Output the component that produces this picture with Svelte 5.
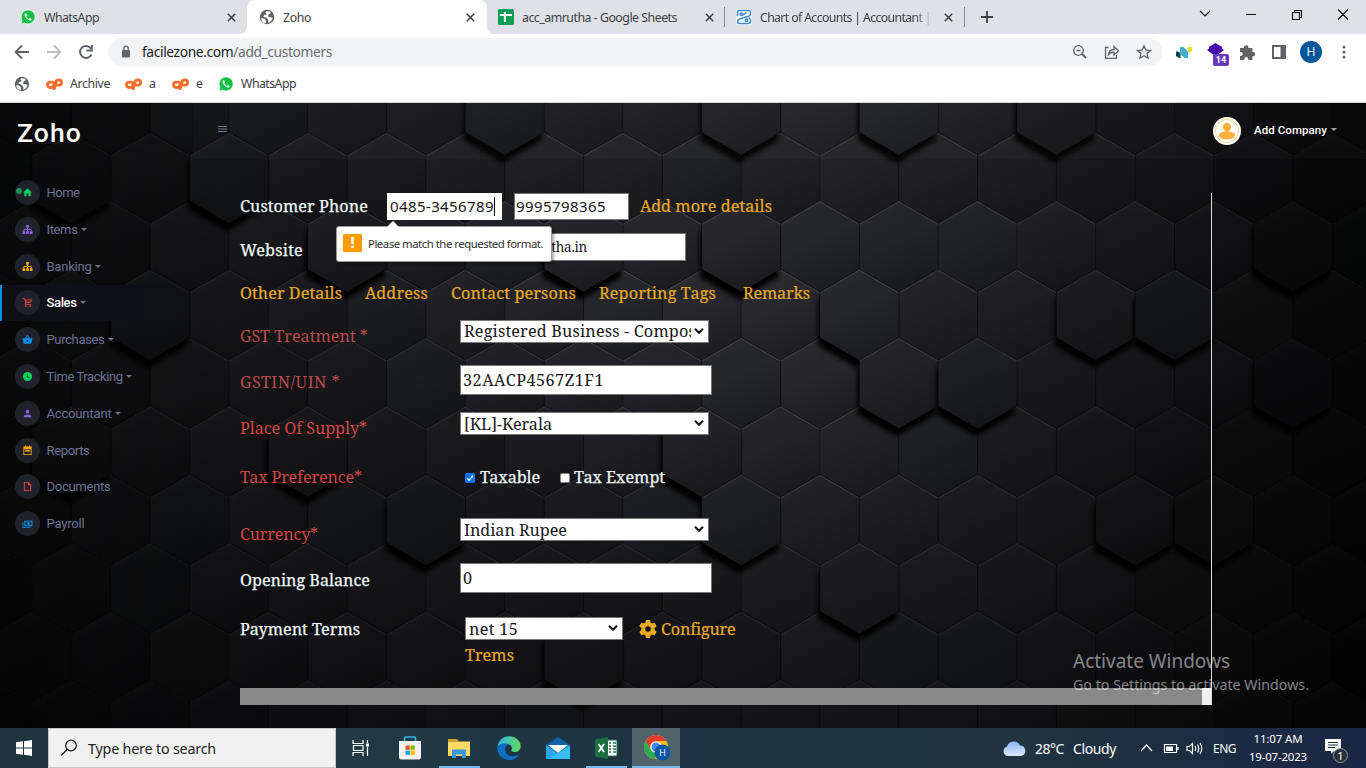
<script>
  const W = 78.8;
  const P = 68.4;
  const raised = new Set([
    '-2:-1', '-2:1', '-2:3', '0:-1', '1:0', '2:2', '1:3', '1:4', '3:-2', '4:-1', '5:0', '4:4', '4:5',
    '0:6', '2:6', '2:1', '-1:-10', '0:-6', '0:-3', '3:-7', '6:-3', '3:-10', '4:-5', '-1:-8', '-2:-4', '1:-9'
  ]);
  const stops = [[0, 12], [150, 19], [350, 27], [600, 35], [820, 40], [1000, 32], [1150, 22], [1300, 9], [1420, 3]];
  function level(x, y) {
    let v = 4;
    if (x <= 0) v = 11;
    for (let i = 0; i < stops.length - 1; i++) {
      const [a, p] = stops[i];
      const [b, q] = stops[i + 1];
      if (x >= a && x < b) v = p + ((q - p) * (x - a)) / (b - a);
    }
    const d = y < 200 ? 0.9 : y < 330 ? 1 : 1 - (y - 330) / 800;
    return v * d;
  }
  const rgb = (v) => `rgb(${Math.round(v)},${Math.round(v * 1.01)},${Math.round(v * 1.13)})`;
  const hexes = [];
  for (let r = -3; r <= 8; r++) {
    for (let c = -12; c <= 8; c++) {
      const x = 820 + W * c + (Math.abs(r) % 2 ? W / 2 : 0);
      const y = 200.8 + P * r - 103;
      const n = Math.abs(Math.sin(r * 12.98 + c * 78.2)) * 0.12 + 0.93;
      const l = level(x, y + 148) * n;
      hexes.push({ x, y, l, up: raised.has(`${r}:${c}`) });
    }
  }
  hexes.sort((a, b) => a.up - b.up);

  function fit(node, w) {
    const now = node.getBoundingClientRect().width;
    node.style.letterSpacing = (w - now) / node.textContent.length + 'px';
  }

  const nav = [
    { t: 'Home', w: 33, k: 'home', c: '#00d25b' },
    { t: 'Items', w: 31, k: 'tree', c: '#8f5fe8', d: 1 },
    { t: 'Banking', w: 45, k: 'tree', c: '#ffab00', d: 1 },
    { t: 'Sales', w: 30, k: 'cart', c: '#fc424a', d: 1, on: 1 },
    { t: 'Purchases', w: 58, k: 'basket', c: '#0090e7', d: 1 },
    { t: 'Time Tracking', w: 76, k: 'clock', c: '#00d25b', d: 1 },
    { t: 'Accountant', w: 65, k: 'user', c: '#8f5fe8', d: 1 },
    { t: 'Reports', w: 43, k: 'cal', c: '#ffab00' },
    { t: 'Documents', w: 64, k: 'doc', c: '#fc424a' },
    { t: 'Payroll', w: 38, k: 'cash', c: '#0090e7' }
  ];
  const paths = {
    home: 'M10 20v-6h4v6h5v-8h3L12 3 2 12h3v8z',
    tree: 'M9 2v6h2v3H5c-1 0-2 1-2 2v3H1v6h6v-6H5v-3h6v3H9v6h6v-6h-2v-3h6v3h-2v6h6v-6h-2v-3c0-1-1-2-2-2h-6V8h2V2z',
    cart: 'M1 2v2h3l3.600 7.600-1.400 2.400c-.7 1.300.2 3 1.800 3h12v-2H8.500l1.100-2h7.500c.8 0 1.400-.4 1.800-1l3.600-6.600H6.200L5.300 2zM8.500 7h11l-2 3.500h-7.300zM8 18a2 2 0 1 0 0 4 2 2 0 0 0 0-4m10 0a2 2 0 1 0 0 4 2 2 0 0 0 0-4',
    basket: 'M5.500 21c-.9 0-1.700-.6-2-1.500L1 10V9h5.600L11 2.400h2L17.400 9H23v1l-2.500 9.500c-.3.900-1.100 1.500-2 1.500zM12 5 9 9h6zm0 8a2 2 0 1 0 0 4 2 2 0 0 0 0-4',
    clock: 'M12 2a10 10 0 1 0 0 20 10 10 0 0 0 0-20m4.200 14.200L11 13V7h1.500v5.200l4.500 2.700z',
    user: 'M12 4a4 4 0 1 1 0 8 4 4 0 0 1 0-8m0 10c4.400 0 8 1.800 8 4v2H4v-2c0-2.200 3.600-4 8-4',
    cal: 'M7 1v2H3v19h18V3h-4V1h-2v2H9V1zM5 9h14v11H5zm2 2v3h10v-3z',
    doc: 'M4 2v20h16V8l-6-6zm2 2h7v5h5v11H6z',
    cash: 'M5 6h18v12H5zm9 3a3 3 0 1 1 0 6 3 3 0 0 1 0-6M9 8a2 2 0 0 1-2 2v4a2 2 0 0 1 2 2h10a2 2 0 0 1 2-2v-4a2 2 0 0 1-2-2zM1 10h2v10h16v2H1z'
  };
</script>

{#snippet globe()}
  <svg class="i16" viewBox="0 0 16 16"><circle cx="8" cy="8" r="7.2" fill="#5f6368" /><path d="M2.300 9 6 10l1 2-.3 2.300C4 14 2 11.500 2.300 9zM7.300 2.300l3.500.2.9 1.500-2.200 1.800-.5 2 2.900.5 1.700 1c-.8 2.600-2.500 4.200-4.200 4.400l-.1-2.900-2.200-2.300-2.700-.8.6-1.700 2.200-.3.200-1.400-1.200-.8z" fill="#fff" /></svg>
{/snippet}
{#snippet whats()}
  <svg class="i16" viewBox="0 0 16 16"><path d="M.8 15.200l1.200-3.900A7 7 0 1 1 4.700 14z" fill="#0ec143" stroke="#fff" stroke-width=".8" /><path d="M5.600 4.200c-.9.400-1.300 1.600-.7 2.900.9 2.100 2.400 3.700 4.700 4.400 1.100.2 2-.5 2.100-1.500L9.900 9l-.9.900C7.700 9.300 6.900 8.500 6.300 7.200l.7-.8-.7-2.100z" fill="#fff" /></svg>
{/snippet}
{#snippet cp()}
  <svg class="cp" viewBox="0 0 17 12"><g fill="none" stroke="#ff6c2c" stroke-width="2.800"><path d="M7.500 4.200H4.200a2.600 2.600 0 0 0 0 5.300H5.400C7.200 9.500 7.700 7.500 8.200 5.500L8.700 3.500M7.900 12 10.100 3.800Q10.600 2 12.300 2H13a2.500 2.500 0 0 1 0 5.200H10.300" /></g></svg>
{/snippet}
{#snippet close()}
  <svg class="x" viewBox="0 0 9 9"><path d="m.8.8 7.400 7.400m0-7.400L.8 8.200" stroke="#3c4043" stroke-width="1.500" /></svg>
{/snippet}
{#snippet chev()}
  <svg class="chev" viewBox="0 0 10 6"><path d="m1 .8 4 4 4-4" fill="none" stroke="#111" stroke-width="2" /></svg>
{/snippet}

<div class="screen">
  <div class="tabs">
    <div class="tab first">{@render whats()}<span use:fit={55}>WhatsApp</span>{@render close()}</div>
    <div class="tab active">{@render globe()}<span use:fit={28}>Zoho</span>{@render close()}</div>
    <div class="tab third">
      <svg class="i16" viewBox="0 0 16 16"><rect width="16" height="16" rx="1.500" fill="#0f9d58" /><path d="M2 6h12M6.900 3v10" stroke="#fff" stroke-width="2" /></svg>
      <span use:fit={155}>acc_amrutha - Google Sheets</span>{@render close()}
    </div>
    <div class="tab fourth">
      <svg class="i16" viewBox="0 0 16 16"><rect width="16" height="16" rx="2" fill="#f6f9fc" /><g fill="none" stroke="#488bc9" stroke-width="1.500"><path d="M1.500 7.200V3q0-1.500 1.500-1.500h9.500q2 0 2 2V5q0 1.800-2 2.200L5 9.500q-3.500 1-3.500 3T3.500 14.500H12q2.500 0 2.500-2.500v-.8q0-2-2-2.400" /><circle cx="5.300" cy="5.200" r="1.200" /><circle cx="10.500" cy="11.300" r="1.200" /><path d="m6.500 6 4-2.300" /></g></svg>
      <span class="fade" use:fit={171}>Chart of Accounts | Accountant |</span>{@render close()}
    </div>
    <svg class="plus" viewBox="0 0 12 12"><path d="M6 0v12M0 6h12" stroke="#3c4043" stroke-width="1.800" /></svg>
    <svg class="winctl" viewBox="0 0 160 16"><path d="m10 5 5 5 5-5M56 8.500h10M102.500 6.500h7v7h-7zM104.500 6V4.500h7v7H110M148 3.500l10 10m0-10-10 10" fill="none" stroke="#111" stroke-width="1.100" /></svg>
  </div>
  <div class="bar">
    <svg class="navs" viewBox="0 0 100 16"><path d="M15 8H2m6-6.500L1.500 8 8 14.500" fill="none" stroke="#5f6368" stroke-width="1.800" /><path d="M33 8h13m-6-6.500L46.500 8 40 14.500" fill="none" stroke="#bcbec1" stroke-width="1.800" /><path d="M77.500 10.500A6 6 0 1 1 77 4.500M77.800 1v5.500h-5.500" fill="none" stroke="#5f6368" stroke-width="1.900" /></svg>
    <div class="omni">
      <svg class="lock" viewBox="0 0 10 13"><rect x="1" y="5" width="8" height="7.500" rx="1" fill="#5f6368" /><path d="M2.800 5V3.300a2.200 2.200 0 0 1 4.400 0V5" fill="none" stroke="#5f6368" stroke-width="1.300" /></svg>
      <span class="url" use:fit={190}>facilezone.com<i>/add_customers</i></span>
      <svg class="omnii" viewBox="0 0 80 16"><g fill="none" stroke="#5f6368" stroke-width="1.300"><circle cx="6.500" cy="6.500" r="4.800" /><path d="m10 10 4 4" stroke-width="2" /><path d="M4.500 6.500h4M36.500 3.500h-3v10.800h11V11M36.500 10.500C37 7 39 5.500 42 5.500V2.500L46.500 7 42 11V8.300Q38.500 8 36.500 10.500z" /><path d="m72 1.800 1.900 4.300 4.700.4-3.600 3.100 1.100 4.600-4.100-2.500-4.100 2.500 1.100-4.600-3.600-3.100 4.700-.4z" /></g></svg>
    </div>
    <div class="ext">
      <svg class="i17" viewBox="0 0 16 12"><path d="M0 5.500h1.500l3 1.500v5H3L0 10z" fill="#07444d" /><path d="M4 1h3.500L12 5.500V12H8.500L4 7.500z" fill="#42aecb" /><path d="M12 1h4v3.500L15 6h-3z" fill="#eadb28" /></svg>
      <div class="cube"><svg viewBox="0 0 18 16"><path d="M9 0l7 4.200v2l2 1.300L9 14 0 7.500l2-1.300v-2z" fill="#4707ac" /></svg><b>14</b></div>
      <svg class="puz" viewBox="0 0 16 16"><path d="M1 4h4V3.400a2.200 2.200 0 0 1 4.400 0V4h4v4h.6a2.100 2.100 0 0 1 0 4.200h-.6V16H9.300v-1a2 2 0 0 0-4 0v1H1v-4h.7a2 2 0 0 0 0-4H1z" fill="#5f6368" /></svg>
      <svg class="side" viewBox="0 0 14 14"><path d="M1 1h12v12H1z" fill="#fff" stroke="#5f6368" stroke-width="2" /><path d="M8.500 1H13v12H8.500z" fill="#5f6368" /></svg>
      <span class="prof">H</span>
      <svg class="dots" viewBox="0 0 4 14"><g fill="#5f6368"><circle cx="2" cy="2" r="1.500" /><circle cx="2" cy="7" r="1.500" /><circle cx="2" cy="12" r="1.500" /></g></svg>
    </div>
  </div>
  <div class="marks">
    {@render globe()}
    <div class="mk m1">{@render cp()}<span use:fit={40}>Archive</span></div>
    <div class="mk m2">{@render cp()}<span>a</span></div>
    <div class="mk m3">{@render cp()}<span>e</span></div>
    <div class="mk m4">{@render whats()}<span use:fit={55}>WhatsApp</span></div>
  </div>

  <div class="page">
    <svg class="bg" viewBox="0 0 1366 625" width="1366" height="625">
      <defs>
        <linearGradient id="shade" x1="0" y1="0" x2=".4" y2="1"><stop offset="0" stop-color="#fff" stop-opacity=".045" /><stop offset=".5" stop-color="#000" stop-opacity="0" /><stop offset="1" stop-color="#000" stop-opacity=".24" /></linearGradient>
        <filter id="soft" x="-30%" y="-30%" width="160%" height="160%"><feGaussianBlur stdDeviation="2.600" /></filter>
        <filter id="soft2"><feGaussianBlur stdDeviation=".6" /></filter>
        <path id="hex" d="M0 0 39.400 22.700V68.300L0 91-39.400 68.300V22.700z" />
      </defs>
      <rect width="1366" height="625" fill="#030304" />
      {#each hexes as h}
        <g transform="translate({h.x} {h.y})">
          {#if h.up}<use href="#hex" fill="#000" filter="url(#soft)" transform="translate(-2 8)" />{/if}
          <use href="#hex" fill={rgb(h.l)} stroke="#000" stroke-opacity=".25" stroke-width="1" />
          <use href="#hex" fill="url(#shade)" />
          <path d="M-39 23.500 0 1 39 23.500" fill="none" stroke={rgb(h.l * 1.6)} stroke-width="1.200" filter="url(#soft2)" />
        </g>
      {/each}
    </svg>
    <div class="side-nav">
      <div class="brand"><span use:fit={65}>Zoho</span><svg class="burger" viewBox="0 0 9 6"><path d="M0 .5h9M0 3h9M0 5.500h9" stroke="#6c7293" /></svg></div>
      {#each nav as n}
        <div class="item" class:on={n.on}>
          <span class="disc"><svg viewBox="0 0 24 24"><path d={paths[n.k]} fill={n.c} fill-rule="evenodd" /></svg>{#if n.k === 'home'}<em></em>{/if}</span>
          <span class="lbl" use:fit={n.w}>{n.t}</span>
          {#if n.d}<s></s>{/if}
        </div>
      {/each}
    </div>
    <div class="main">
      <header>
        <svg class="avatar" viewBox="0 0 28 28"><circle cx="14" cy="14" r="14" fill="#fff" /><circle cx="14" cy="14" r="11.600" fill="none" stroke="#fbb03b" stroke-width=".6" /><circle cx="14" cy="10" r="4.200" fill="#fbb03b" /><ellipse cx="14" cy="18.300" rx="8.200" ry="4" fill="#fbb03b" /></svg>
        <b use:fit={73}>Add Company</b><s></s>
      </header>
      <div class="form">
        <div class="row r1">
          <div class="l"><span use:fit={128}>Customer Phone</span></div>
          <div class="in a"><span use:fit={104}>0485-3456789</span><u></u>
            <div class="tip"><svg class="arrow" viewBox="0 0 12 6"><path d="M0 6 6 0l6 6z" fill="#fff" /></svg><span class="warn">!</span><span class="msg" use:fit={175}>Please match the requested format.</span></div>
          </div>
          <div class="in b"><span use:fit={90}>9995798365</span></div>
          <span class="gold" use:fit={132}>Add more details</span>
        </div>
        <div class="row r2"><div class="l"><span use:fit={63}>Website</span></div><div class="in web"><span use:fit={44}>utha.in</span></div></div>
        <div class="row r3">
          <span class="gold" use:fit={102}>Other Details</span><span class="gold g2" use:fit={63}>Address</span><span class="gold g2" use:fit={125}>Contact persons</span><span class="gold g2" use:fit={117}>Reporting Tags</span><span class="gold g3" use:fit={67}>Remarks</span>
        </div>
        <div class="row r4"><div class="l dim low"><span use:fit={128}>GST Treatment *</span></div><div class="sel"><span class="clip"><span use:fit={232}>Registered Business - Compos</span></span>{@render chev()}</div></div>
        <div class="row r5"><div class="l dim"><span use:fit={100}>GSTIN/UIN *</span></div><div class="in wide"><span use:fit={141}>32AACP4567Z1F1</span></div></div>
        <div class="row r6"><div class="l red low"><span use:fit={127}>Place Of Supply*</span></div><div class="sel"><span use:fit={88}>[KL]-Kerala</span>{@render chev()}</div></div>
        <div class="row r7">
          <div class="l red"><span use:fit={122}>Tax Preference*</span></div>
          <svg class="chk" viewBox="0 0 10 10"><rect width="10" height="10" rx="1.500" fill="#0075ff" /><path d="m2 5.200 2.100 2.100L8 2.800" fill="none" stroke="#fff" stroke-width="1.400" /></svg>
          <span class="opt" use:fit={60}>Taxable</span>
          <i class="box"></i>
          <span class="opt" use:fit={91}>Tax Exempt</span>
        </div>
        <div class="row r6 r8"><div class="l red low"><span use:fit={78}>Currency*</span></div><div class="sel"><span use:fit={103}>Indian Rupee</span>{@render chev()}</div></div>
        <div class="row r5 r9"><div class="l"><span use:fit={130}>Opening Balance</span></div><div class="in wide"><span use:fit={10}>0</span></div></div>
        <div class="row r10">
          <div class="l"><span use:fit={120}>Payment Terms</span></div>
          <div class="sel short"><span use:fit={49}>net 15</span>{@render chev()}</div>
          <svg class="gear" viewBox="0 0 18 18"><path d="M7 0h4l.6 2.600 1.500.9 2.600-.8 2 3.500-2 1.900v1.800l2 1.900-2 3.500-2.600-.8-1.500.9L11 18H7l-.6-2.600-1.500-.9-2.600.8-2-3.500 2-1.900V8.100l-2-1.900 2-3.500 2.600.8 1.500-.9zm2 6.200a2.800 2.800 0 1 0 0 5.600 2.800 2.800 0 0 0 0-5.600" fill="#e8aa25" fill-rule="evenodd" /></svg>
          <span class="gold" use:fit={74}>Configure</span>
        </div>
        <div class="row r11"><span class="gold" use:fit={49}>Trems</span></div>
        <div class="scroll"></div>
      </div>
    </div>
    <div class="act"><span class="big" use:fit={157}>Activate Windows</span><span use:fit={236}>Go to Settings to activate Windows.</span></div>
  </div>

  <div class="task">
    <div class="start"><svg viewBox="0 0 16 16"><path d="M0 2.300 7 1.300V7.500H0zM8 1.200 16 0v7.500H8zM0 8.500h7v6.200l-7-1zM8 8.500h8V16l-8-1.200z" fill="#fff" /></svg></div>
    <div class="search"><svg viewBox="0 0 18 18"><circle cx="11" cy="6.500" r="5.300" fill="none" stroke="#222" stroke-width="1.300" /><path d="m7.200 10.500-6 6" stroke="#222" stroke-width="1.400" /></svg><span use:fit={128}>Type here to search</span></div>
    <div class="ic"><svg width="18" height="16" viewBox="0 0 18 16"><path d="M1 0v3.500h10V0M1 16v-3.500h10V16M1.500 5.500h9.500v5H1.500zM15.500 0v3m0 4v9" fill="none" stroke="#fff" stroke-width="1.200" /><path d="M14 3.500h3v3h-3z" fill="#fff" /></svg></div>
    <div class="ic store"><svg width="24" height="24" viewBox="0 0 24 24"><path d="M6.500 7V2.500Q6.500 1 8 1h8q1.500 0 1.500 1.500V7" fill="none" stroke="#35b7ea" stroke-width="1.700" /><path d="M1 5h22v16q0 2.500-2.500 2.500h-17Q1 23.500 1 21z" fill="#f3f3f3" /><path d="M7.500 9.500h4.300v4.300H7.500z" fill="#f25022" /><path d="M12.500 9.500h4.300v4.300h-4.300z" fill="#7fba00" /><path d="M7.500 14.500h4.300v4.300H7.500z" fill="#00a4ef" /><path d="M12.500 14.500h4.300v4.300h-4.300z" fill="#ffb900" /></svg></div>
    <div class="ic run"><svg width="22" height="19" viewBox="0 0 22 19"><path d="M0 0h9l2 2.500H0z" fill="#d9a21b" /><path d="M0 2.500h22V17H0z" fill="#ffd866" /><path d="M4 10.500h14V19h-4v-3.500H8V19H4z" fill="#3a96dd" /></svg></div>
    <div class="ic"><svg width="24" height="24" viewBox="0 0 24 24"><defs><linearGradient id="eg" x1="0" x2="1"><stop stop-color="#2ab4e8" /><stop offset="1" stop-color="#64d858" /></linearGradient></defs><path d="M.5 12C.5 5 6 .3 12.300.3 18.500.3 23.700 5 23.700 10c0 4.200-3 6-6 6-2.500 0-4-.8-3.200-2 .9-1.300.6-4.500-2.300-5.500C8.500 7.300 2 7.500.5 12z" fill="url(#eg)" /><path d="M.3 12C1.500 7.500 8.500 6.500 12 8.500c-2.500.5-4 2.300-4 5C8 18 13 22 19.500 19.500c1.500-.6 2.600-.8 1.500.7A12 12 0 0 1 .3 12z" fill="#0f6fc5" /></svg></div>
    <div class="ic"><svg width="24" height="22" viewBox="0 0 24 22"><path d="M0 8 12 0l12 8v6H0z" fill="#1363a9" /><path d="M2 8h20L12 16z" fill="#fff" /><path d="M0 8l12 8.500L24 8v14H0z" fill="#29a7e8" /><path d="m2 22 22-13v13z" fill="#35bff5" /></svg></div>
    <div class="ic run xl"><svg width="23" height="22" viewBox="0 0 23 22"><path d="M12 3h10v16H12z" fill="#fff" stroke="#1d7044" /><path d="M14 6h2m2 0h3m-7 3h2m2 0h3m-7 3h2m2 0h3m-7 3h2m2 0h3" stroke="#1d7044" stroke-width="1.500" /><path d="M0 2.500 13 0v22L0 19.500z" fill="#1d7044" /><path d="m3.500 7 5.500 8m0-8-5.500 8" stroke="#fff" stroke-width="1.800" /></svg></div>
    <div class="ic cur"><svg width="28" height="26" viewBox="0 0 28 26"><circle cx="12" cy="12" r="12" fill="#fbc116" /><path d="M1.600 6A12 12 0 0 1 22.400 6H12a6 6 0 0 0-5.600 8z" fill="#e33b2e" /><path d="M1.600 6 7 15a6 6 0 0 0 6.500 2.800L11 24A12 12 0 0 1 1.600 6z" fill="#2da94f" /><circle cx="12" cy="12" r="5.600" fill="#fff" /><circle cx="12" cy="12" r="4.500" fill="#4285f4" /><circle cx="18.500" cy="17.500" r="8" fill="#0a57a5" /><text x="18.500" y="20.800" font-size="9" font-family="Open Sans" fill="#fff" text-anchor="middle">H</text></svg></div>
    <div class="tray">
      <svg class="cloud" viewBox="0 0 24 16"><defs><linearGradient id="cl" x2="0" y2="1"><stop stop-color="#8ab4f0" /><stop offset="1" stop-color="#dbe8fc" /></linearGradient></defs><path d="M5 16a5 5 0 0 1 0-9.500A7 7 0 0 1 18 5.500 5.300 5.300 0 0 1 19 16z" fill="url(#cl)" /></svg>
      <span class="wx" use:fit={29}>28°C</span><span class="wx w2" use:fit={43}>Cloudy</span>
      <svg class="sys" viewBox="0 0 64 16"><g fill="none" stroke="#fff" stroke-width="1.200"><path d="m1 11 5.500-6 5.500 6M24.500 4.500h12v8h-12zM38 7v3M47 6.500h2.500l3-3v10l-3-3H47zM55 6q1.500 2.500 0 5M57.500 4.500q2.500 4 0 8M60 3q3.500 5.500 0 11" /></g><path d="M26 6.500h7v4.500h-7z" fill="#fff" /></svg>
      <span class="eng" use:fit={23}>ENG</span>
      <div class="clock"><span use:fit={49}>11:07 AM</span><span use:fit={58}>19-07-2023</span></div>
      <div class="note"><svg width="16" height="16" viewBox="0 0 16 16"><path d="M0 0h16v12H9l-3 3v-3H0z" fill="#fff" /><path d="M3 3.500h10M3 6h10M3 8.500h7" stroke="#1d2c3f" /></svg><b>1</b></div>
    </div>
  </div>
</div>

<style>
  :global(body) { margin: 0; overflow: hidden; }
  .screen { width: 1366px; height: 768px; display: flex; flex-direction: column; overflow: hidden; font: 12.300px 'Noto Sans', sans-serif; color: #3c4043; }
  .screen :global(*) { box-sizing: border-box; }
  span, b { white-space: nowrap; flex: none; }
  svg { flex: none; display: block; }
  .tabs { height: 34px; background: #dee1e6; display: flex; position: relative; }
  .tab { display: flex; align-items: center; gap: 8px; height: 34px; }
  .tab .x { margin-left: auto; }
  .first { width: 247px; padding: 0 11px 0 20px; }
  .active { width: 240px; background: #fff; padding: 0 12px 0 12px; border-radius: 8px 8px 0 0; position: relative; }
  .active::before, .active::after { content: ''; position: absolute; bottom: 0; width: 8px; height: 8px; left: -8px; background: radial-gradient(circle at 0 0, #dee1e6 8px, #fff 8px); }
  .active::after { left: auto; right: -8px; background: radial-gradient(circle at 100% 0, #dee1e6 8px, #fff 8px); }
  .third { width: 239px; padding: 0 12px 0 11px; position: relative; }
  .fourth { width: 240px; padding: 0 13px 0 10px; position: relative; }
  .third::after, .fourth::after { content: ''; position: absolute; right: 1px; top: 7px; height: 20px; width: 1px; background: #85888c; }
  .fade { -webkit-mask: linear-gradient(90deg, #000 90%, #0002); }
  .i16 { width: 16px; height: 16px; }
  .x { width: 9px; height: 9px; }
  .plus { width: 12px; height: 12px; margin: 11px 0 0 15px; }
  .winctl { width: 160px; margin: 6px 0 0 197px; height: 16px; }
  .bar { height: 35px; background: #fff; display: flex; align-items: center; }
  .navs { width: 100px; height: 16px; margin-left: 14px; }
  .omni { height: 28px; margin-left: -6px; width: 1054px; border-radius: 14px; background: #f1f3f4; display: flex; align-items: center; padding: 0 10px 0 13px; }
  .lock { width: 10px; height: 13px; }
  .url { font-size: 13.800px; color: #202124; margin-left: 11px; }
  .url i { font-style: normal; color: #696d71; }
  .omnii { width: 80px; height: 16px; margin-left: auto; }
  .ext { display: flex; align-items: center; margin-left: 14px; }
  .i17 { width: 16px; height: 12px; }
  .cube { position: relative; margin-left: 15px; width: 17px; height: 17px; }
  .cube b { position: absolute; left: 6px; top: 11px; background: #673ab7; color: #fff; border-radius: 2px; font: bold 9px/12px Roboto; padding: 0 2px; width: 16px; text-align: center; }
  .puz { width: 16px; height: 16px; margin-left: 15px; }
  .side { width: 14px; height: 14px; margin-left: 17px; }
  .prof { width: 22px; height: 22px; border-radius: 50%; background: #01579b; color: #fff; text-align: center; font: 12px/22px 'Open Sans'; margin-left: 14px; }
  .dots { width: 4px; height: 14px; margin-left: 20px; }
  .marks { height: 34px; background: #fff; border-bottom: 1px solid #d4d5d7; display: flex; align-items: center; padding: 0 0 4px 14px; }
  .mk { display: flex; align-items: center; gap: 7px; }
  .m1 { margin-left: 16px; } .m2 { margin-left: 15px; } .m3 { margin-left: 16px; } .m4 { margin-left: 15px; }
  .m2 span, .m3 span { width: 7px; }
  .cp { width: 17px; height: 12px; }
  .page { height: 625px; position: relative; display: flex; background: #050506; overflow: hidden; }
  .bg { position: absolute; inset: 0; }
  .side-nav { width: 240px; position: relative; background: linear-gradient(90deg, #0004, #0000); }
  .brand { height: 71.200px; padding: 12px 13px 0 17px; display: flex; justify-content: space-between; font: 500 26.500px/36px Roboto; color: #fff; }
  .burger { width: 9px; height: 6px; margin-top: 11px; }
  .item { height: 36.800px; display: flex; align-items: center; padding-left: 15px; width: 190px; color: #6c7293; font: 13px Roboto, sans-serif; }
  .disc { width: 25px; height: 25px; border-radius: 50%; background: #20222b; display: flex; align-items: center; justify-content: center; margin-right: 6.500px; position: relative; }
  .disc svg { width: 11px; height: 11px; }
  .disc em { position: absolute; left: 1px; top: 8px; width: 6px; height: 6px; border-radius: 50%; background: #208c59; }
  .item.on { background: linear-gradient(90deg, #0f1015 75%, #0f101500); border-left: 2px solid #0090e7; padding-left: 13px; }
  .on .lbl { color: #fff; font-weight: 500; }
  s { border: 3px solid transparent; border-top-color: currentColor; border-bottom: 0; margin-left: 3.500px; }
  .main { flex: 1; position: relative; }
  header { height: 56px; display: flex; align-items: center; padding: 0 0 1px 1020px; margin-left: -47px; background: #ffffff05; color: #fff; }
  .avatar { width: 28px; height: 28px; margin-right: 13px; }
  header b { font: 500 11.500px Roboto; position: relative; top: -1px; }
  header s { color: #a2a2a8; position: relative; top: -1px; }
  .form { margin-top: 34px; width: 972px; height: 512px; border-right: 1px solid #ddd; font: 16.200px/24px 'Noto Serif', 'DejaVu Serif Condensed', 'DejaVu Serif', serif; color: #edf7f7; }
  .row { display: flex; align-items: center; }
  .l { width: 220px; flex: none; }
  .l span { display: inline-block; -webkit-text-stroke: .25px; }
  .dim { color: #b84c4c; } .red { color: #d34545; }
  .dim span, .red span { -webkit-text-stroke: 0; }
  .low { padding-top: 9px; }
  .gold { color: #e8aa25; -webkit-text-stroke: .2px; }
  .in { background: #fff; border: 1px solid #777; color: #171717; display: flex; align-items: center; height: 28px; }
  .r1 { height: 28px; align-items: flex-start; }
  .r1 .l { width: 147px; padding-top: 1px; } .r1 .gold { margin: 1px 0 0 11px; }
  .a, .b { width: 115px; height: 27px; font: 15px 'Noto Sans'; padding: 0 0 1px 2px; }
  .b { padding-left: 1px; }
  .a { border-color: #fff; position: relative; }
  .a u { width: 1px; height: 19px; background: #000; }
  .b { margin-left: 12px; }
  .tip { position: absolute; left: -52px; top: 32px; width: 216px; height: 36px; border: 1px solid #999; border-radius: 3px; background: #fff; display: flex; align-items: center; box-shadow: 2px 2px 3px #0005; z-index: 3; padding: 0 0 2px 6px; }
  .arrow { position: absolute; left: 50px; top: -6px; width: 12px; height: 6px; }
  .warn { width: 19px; height: 18px; border-radius: 1px; background: #ff9d00; color: #fff; font: 900 15px/18px Roboto; text-align: center; }
  .msg { font-size: 11.400px; color: #333; margin-left: 6px; }
  .r2 { margin-top: 12px; height: 28px; }
  .r2 .l { padding-top: 5px; }
  .web { width: 226px; padding-left: 82px; font-size: 13.500px; }
  .r3 { margin-top: 20px; height: 24px; }
  .g2 { margin-left: 23px; } .g3 { margin-left: 27px; }
  .r4 { margin-top: 15px; height: 23px; }
  .sel { width: 249px; height: 23px; background: #fff; border: 1px solid #777; color: #171717; display: flex; align-items: center; padding: 0 4px 0 3px; }
  .chev { width: 10px; height: 6px; margin: 0 0 1px auto; }
  .clip { width: 227px; overflow: hidden; height: 21px; line-height: 21px; }
  .clip span { display: inline-block; }
  .r5 { margin-top: 22px; height: 30px; }
  .r5 .l { padding-top: 4px; }
  .wide { width: 252px; height: 30px; padding-left: 2px; }
  .r6 { margin-top: 17px; height: 23px; }
  .r7 { margin-top: 30px; height: 24px; }
  .chk { width: 10px; height: 10px; margin: 2px 5px 0 5px; }
  .box { width: 10px; height: 10px; background: #fff; border: 1px solid #888; border-radius: 2px; margin: 2px 4px 0 20px; }
  .opt { -webkit-text-stroke: .25px; }
  .r8 { margin-top: 29px; }
  .r10 { margin-top: 24px; height: 23px; }
  .short { width: 158px; margin-left: 5px; }
  .gear { width: 18px; height: 18px; margin: 0 4px 0 16px; }
  .r11 { padding-left: 225px; margin-top: 3px; height: 24px; }
  .scroll { margin-top: 21px; height: 17px; background: #898989; border-right: 9px solid #f1f1f1; }
  .act { position: absolute; left: 1073px; top: 546px; display: flex; flex-direction: column; align-items: flex-start; font: 14.200px/21px 'Noto Sans'; color: #ffffff80; }
  .act .big { font-size: 19px; line-height: 25px; }
  .task { height: 40px; display: flex; background: linear-gradient(90deg, #20353e, #213b43 25%, #1c3343 50%, #1f3340 75%, #1a2744); color: #fff; font-family: 'Noto Sans', sans-serif; }
  .start { width: 48px; padding: 12px 0 0 16px; }
  .start svg { width: 16px; height: 16px; }
  .search { width: 288px; background: #f1f1f1; border: 1px solid #c5c8ca; display: flex; align-items: center; color: #222; font-size: 14.300px; }
  .search svg { width: 18px; height: 18px; margin: 0 10px 0 11px; }
  .ic { width: 49.300px; display: flex; align-items: center; justify-content: center; position: relative; }
  .run::after, .cur::after { content: ''; position: absolute; left: 4px; right: 4px; bottom: 0; height: 2px; background: #76b9ed; }
  .ic.cur { width: 48px; background: #50646c; margin-left: 1px; }
  .ic.cur svg { margin-left: 3px; }
  .cur::after { left: 0; right: 0; }
  .ic.xl { width: 49px; }
  .tray { margin-left: auto; width: 364px; display: flex; align-items: center; }
  .cloud { width: 24px; height: 16px; }
  .wx { font-size: 14px; margin-left: 9px; } .w2 { margin-left: 9px; }
  .sys { width: 64px; height: 16px; margin-left: 24px; }
  .eng { font-size: 12px; margin-left: 9px; }
  .clock { width: 58px; margin-left: 13px; display: flex; flex-direction: column; align-items: center; font-size: 11.500px; line-height: 18px; }
  .note { position: relative; margin-left: 18px; width: 25px; height: 18px; }
  .note b { position: absolute; left: 8px; top: 9px; width: 15px; height: 15px; border: 1px solid #999; border-radius: 50%; background: #26303b; font: 11px/13px 'Noto Sans'; text-align: center; }
</style>
